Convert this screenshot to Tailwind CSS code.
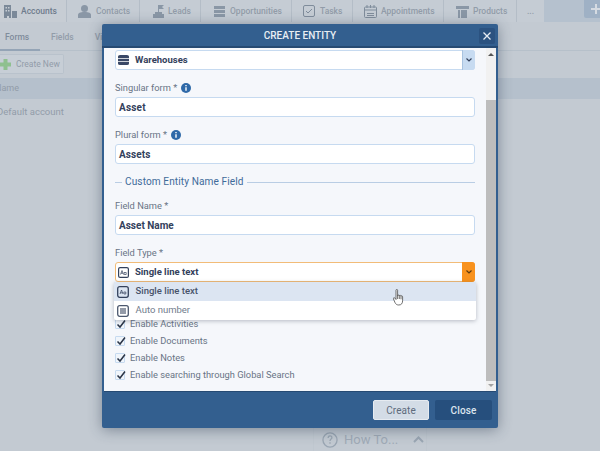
<!DOCTYPE html>
<html><head><meta charset="utf-8"><script src="https://cdn.jsdelivr.net/npm/@tailwindcss/browser@4"></script></head>
<body class="m-0 overflow-hidden">
<div class="relative w-[600px] h-[451px] overflow-hidden bg-[#c3cad2] font-['Roboto',sans-serif] text-[#929ca9]">
  <!-- page behind -->
  <div class="flex h-[22px] text-[8.5px] font-medium bg-[#c5ccd4]">
    <div class="w-[67px] flex items-center gap-[4px] pl-[4px] border-r border-[#b4bdc7] text-[#6f7c8c] bg-[#c7cdd4]">
      <svg width="13" height="13" viewBox="0 0 13 13" fill="#7b8999"><path d="M0 0h7v13H5v-2H3v2H0zM1.500 2v1.500H3V2zM4 2v1.500h1.500V2zM1.500 5v1.500H3V5zM4 5v1.500h1.500V5zM8 6h5v7H8z" fill-rule="evenodd"/></svg>Accounts</div>
    <div class="w-[73px] flex items-center gap-[5px] pl-[11px] border-r border-[#b4bdc7]">
      <svg width="13" height="13" viewBox="0 0 13 13" fill="#8a97a6"><circle cx="6.500" cy="3.500" r="3.500"/><path d="M0 13V10c0-2 2-3 6.500-3s6.500 1 6.500 3v3z"/></svg>Contacts</div>
    <div class="w-[61px] flex items-center gap-[3px] pl-[12px] border-r border-[#b4bdc7]">
      <svg width="13" height="13" viewBox="0 0 13 13" fill="#8a97a6"><path d="M6 0h1v7H6zM7 0h5l-2 2 2 2H7zM1 9h11v4H1zM3 7h7v2H3z"/></svg>Leads</div>
    <div class="w-[91px] flex items-center gap-[4px] pl-[12px] border-r border-[#b4bdc7]">
      <svg width="13" height="13" viewBox="0 0 13 13" fill="#8a97a6"><path d="M1 1h11v3H1zM1 5h11v3H1zM1 9h11v3H1z"/></svg>Opportunities</div>
    <div class="w-[61px] flex items-center gap-[5px] pl-[11px] border-r border-[#b4bdc7]">
      <svg width="12" height="12" viewBox="0 0 12 12" fill="none" stroke="#7f8c9b"><rect x="0.500" y="0.500" width="11" height="11" rx="1.500"/><path d="M3 6l2 2 4-4"/></svg>Tasks</div>
    <div class="w-[91px] flex items-center gap-[4px] pl-[11px] border-r border-[#b4bdc7]">
      <svg width="13" height="13" viewBox="0 0 13 13" fill="none" stroke="#7f8c9b"><rect x="0.500" y="2" width="12" height="10.500" rx="1"/><path d="M0.500 5h12M3 0v3M6.500 0v3M10 0v3M3 8.500h7M3 10.500h7" /></svg>Appointments</div>
    <div class="w-[73px] flex items-center gap-[4px] pl-[12px] border-r border-[#b4bdc7]">
      <svg width="13" height="13" viewBox="0 0 13 13" fill="#8a97a6"><path d="M0 1h13v3H0zM2 5h2v8H2zM5 5h6v8H5z"/></svg>Products</div>
    <div class="w-[27px] flex items-center pl-[10px]">...</div>
    <div class="flex-1 bg-[#b5c1ce] relative">
      <div class="absolute right-0 top-0 w-[16px] h-[18px] bg-[#9fb1c5] rounded-bl-[2px] flex items-center justify-center pl-[8px]">
        <svg class="shrink-0" width="10" height="10" viewBox="0 0 10 10" fill="#d5dbe2"><path d="M4 0h2v4h4v2H6v4H4V6H0V4h4z"/></svg>
      </div>
    </div>
  </div>
  <div class="flex h-[29px] text-[8.5px] font-medium border-b border-[#b6c0ca] relative">
    <div class="w-[40px] h-[29px] pl-[5px] pt-[9px] text-[#7f8c9b] border-b-2 border-[#94a4b6]">Forms</div>
    <div class="pl-[11px] pt-[9px]">Fields</div>
    <div class="pl-[21px] pt-[9px]">Views</div>
  </div>
  <div class="pt-[3px] h-[27px]">
    <div class="w-[64px] h-[20px] bg-[#c7ced6] border-y border-r border-[#b9c2cc] rounded-r-[2px] flex items-center gap-[5px] text-[8.5px] whitespace-nowrap">
      <svg class="shrink-0" width="11" height="11" viewBox="0 0 11 11" fill="#8fc08f"><path d="M3.500 0h4v3.500H11v4H7.500V11h-4V7.500H0v-4h3.500z"/></svg>Create New</div>
  </div>
  <div class="h-[21px] bg-[#b5c0cc] flex items-center text-[9px] -ml-[5px]">Name</div>
  <div class="pt-[6px] text-[9.5px] -ml-[3px]">Default account</div>
  <div class="absolute left-[313px] bottom-0 w-[114px] h-[23px] border-x border-[#bfc7cf] flex items-center gap-[6px] pl-[8px] text-[13px] text-[#a0abb7]">
    <svg width="16" height="16" viewBox="0 0 17 17" fill="none" stroke="#9aa6b3" stroke-width="1.400"><circle cx="8.500" cy="8.500" r="7.500"/><path d="M6.500 6.500c0-3 4-3 4-.5 0 1.500-2 1.500-2 3.500M8.500 11v1.500"/></svg>
    <span>How To...</span>
    <svg class="ml-[9px]" width="11" height="7" viewBox="0 0 11 7" fill="none" stroke="#9aa6b3" stroke-width="2"><path d="M1 6l4.500-4.500L10 6"/></svg>
  </div>

  <!-- modal -->
  <div class="absolute left-[102px] top-[24px] w-[396px] h-[404px] flex flex-col rounded-[2px] bg-[#335f8f] shadow-[0_2px_14px_rgba(40,55,75,0.45)]">
    <div class="h-[22px] shrink-0 relative flex items-center justify-center text-[10px] font-medium text-[#e9eef4]">
      <span>CREATE ENTITY</span>
      <div class="absolute right-[3px] top-[4px] w-[16px] h-[16px] bg-[#2b5280] rounded-[2px] flex items-center justify-center">
        <svg width="8" height="8" viewBox="0 0 8 8" stroke="#e8edf3" stroke-width="1.300"><path d="M0.500 0.500l7 7M7.500 0.500l-7 7"/></svg>
      </div>
    </div>
    <div class="h-[2px] shrink-0 bg-[#264a73]"></div>
    <div class="relative mx-[2px] h-[344px] shrink-0 bg-[#f5f7fb] border-b border-[#264a73] flex">
      <div class="w-[382px] pl-[11px] relative">
        <!-- warehouses -->
        <div class="w-[360px] h-[20px] bg-white border border-[#c6daf0] rounded-[3px] flex items-center mt-[2px] relative">
          <svg class="ml-[2px] shrink-0" width="11" height="10" viewBox="0 0 11 10" fill="#3a4866"><path d="M0 1.500Q0 0 2 0h7q2 0 2 1.500V3H0zM0 3.700h11v2.600H0zM0 7h11v1.500Q11 10 9 10H2q-2 0-2-1.500z"/></svg>
          <span class="ml-[6px] text-[9.500px] font-bold text-[#33415c]">Warehouses</span>
          <div class="absolute -right-px -top-px -bottom-px w-[13px] bg-[#c7dbf1] rounded-r-[3px] border-l border-[#a8c3e0] flex items-center justify-center">
            <svg width="6" height="4" viewBox="0 0 6 4" fill="none" stroke="#33415c" stroke-width="1.200"><path d="M0.500 0.500L3 3l2.500-2.500"/></svg>
          </div>
        </div>
        <div class="mt-[9px] h-[18px] flex items-center gap-[4px] text-[9.300px] text-[#687485]">Singular form *
          <svg width="10" height="10" viewBox="0 0 10 10"><circle cx="5" cy="5" r="5" fill="#2f69a8"/><path d="M4.300 4.200h1.400v3.600H4.300zM4.300 2h1.400v1.300H4.300z" fill="#fff"/></svg>
        </div>
        <div class="w-[360px] h-[20px] bg-white border border-[#c6daf0] rounded-[3px] flex items-center pl-[3px] text-[10px] font-bold text-[#33415c] tracking-[0.2px]">Asset</div>
        <div class="mt-[9px] h-[18px] flex items-center gap-[4px] text-[9.300px] text-[#687485]">Plural form *
          <svg width="10" height="10" viewBox="0 0 10 10"><circle cx="5" cy="5" r="5" fill="#2f69a8"/><path d="M4.300 4.200h1.400v3.600H4.300zM4.300 2h1.400v1.300H4.300z" fill="#fff"/></svg>
        </div>
        <div class="w-[360px] h-[20px] bg-white border border-[#c6daf0] rounded-[3px] flex items-center pl-[3px] text-[10px] font-bold text-[#33415c] tracking-[0.1px]">Assets</div>
        <div class="mt-[9px] w-[360px] h-[18px] flex items-center">
          <div class="w-[7px] h-px bg-[#b9cde4]"></div>
          <span class="px-[3px] text-[10.100px] text-[#3f6b9a] tracking-[0.1px]">Custom Entity Name Field</span>
          <div class="flex-1 h-px bg-[#b9cde4]"></div>
        </div>
        <div class="mt-[6px] h-[18px] flex items-center text-[9.300px] text-[#687485]">Field Name *</div>
        <div class="w-[360px] h-[20px] bg-white border border-[#c6daf0] rounded-[3px] flex items-center pl-[3px] text-[10px] font-bold text-[#33415c]">Asset Name</div>
        <div class="mt-[9px] h-[18px] flex items-center text-[9.300px] text-[#687485]">Field Type *</div>
        <div class="w-[360px] h-[20px] bg-white border border-[#f2bc78] rounded-[3px] flex items-center relative">
          <svg class="ml-[2px] shrink-0" width="11" height="11" viewBox="0 0 11 11" fill="none"><rect x="0.600" y="0.600" width="9.800" height="9.800" rx="1.500" stroke="#33415c" stroke-width="1.200"/><path d="M2.500 7.500L4 3.500l1.500 4M3 6.200h2M6 5.500h2.200v2H6.200z" stroke="#33415c" stroke-width="0.700"/></svg>
          <span class="ml-[6px] text-[9.500px] font-bold text-[#33415c]">Single line text</span>
          <div class="absolute -right-px -top-px -bottom-px w-[13px] bg-[#f8921e] rounded-r-[3px] flex items-center justify-center">
            <svg width="6" height="4" viewBox="0 0 6 4" fill="none" stroke="#5d3a10" stroke-width="1.200"><path d="M0.500 0.500L3 3l2.500-2.500"/></svg>
          </div>
        </div>
        <!-- checks -->
        <div class="mt-[35px] flex flex-col gap-[4px] text-[9.300px] text-[#687485]">
          <div class="h-[13px] flex items-center gap-[5px]">
            <span class="w-[10px] h-[10px] shrink-0 bg-[#f0f5fb] border border-[#c6daf0] rounded-[1px] relative"><svg class="absolute left-0 -top-[1px]" width="10" height="10" viewBox="0 0 10 10" fill="none" stroke="#2a3447" stroke-width="1.500"><path d="M1.500 5.500l2.500 2.500L9 1.500"/></svg></span>Enable Activities</div>
          <div class="h-[13px] flex items-center gap-[5px]">
            <span class="w-[10px] h-[10px] shrink-0 bg-[#f0f5fb] border border-[#c6daf0] rounded-[1px] relative"><svg class="absolute left-0 -top-[1px]" width="10" height="10" viewBox="0 0 10 10" fill="none" stroke="#2a3447" stroke-width="1.500"><path d="M1.500 5.500l2.500 2.500L9 1.500"/></svg></span>Enable Documents</div>
          <div class="h-[13px] flex items-center gap-[5px]">
            <span class="w-[10px] h-[10px] shrink-0 bg-[#f0f5fb] border border-[#c6daf0] rounded-[1px] relative"><svg class="absolute left-0 -top-[1px]" width="10" height="10" viewBox="0 0 10 10" fill="none" stroke="#2a3447" stroke-width="1.500"><path d="M1.500 5.500l2.500 2.500L9 1.500"/></svg></span>Enable Notes</div>
          <div class="h-[13px] flex items-center gap-[5px]">
            <span class="w-[10px] h-[10px] shrink-0 bg-[#f0f5fb] border border-[#c6daf0] rounded-[1px] relative"><svg class="absolute left-0 -top-[1px]" width="10" height="10" viewBox="0 0 10 10" fill="none" stroke="#2a3447" stroke-width="1.500"><path d="M1.500 5.500l2.500 2.500L9 1.500"/></svg></span>Enable searching through Global Search</div>
        </div>
        <!-- dropdown -->
        <div class="absolute left-[10px] top-[234px] w-[362px] h-[38px] bg-white rounded-[2px] shadow-[0_1px_4px_rgba(60,70,90,0.35)] text-[9.500px]">
          <div class="h-[19px] bg-[#dce5f2] flex items-center font-medium text-[#47536a]">
            <svg class="ml-[3px] shrink-0" width="12" height="12" viewBox="0 0 12 12" fill="none"><rect x="0.700" y="0.700" width="10.600" height="10.600" rx="2" stroke="#33415c" stroke-width="1.300"/><path d="M3 8L4.500 4 6 8M3.500 6.800h2M6.800 6h2v2H7z" stroke="#33415c" stroke-width="0.700"/></svg>
            <span class="ml-[6.500px]">Single line text</span>
          </div>
          <div class="h-[19px] flex items-center text-[#717c8c]">
            <svg class="ml-[3px] shrink-0" width="12" height="12" viewBox="0 0 12 12" fill="none"><rect x="0.700" y="0.700" width="10.600" height="10.600" rx="2" stroke="#4c586e" stroke-width="1.300"/><path d="M4 3v6M6 3v6M8 3v6" stroke="#4c586e" stroke-width="1.200"/></svg>
            <span class="ml-[6.500px]">Auto number</span>
          </div>
        </div>
      </div>
      <!-- scrollbar -->
      <div class="w-[10px] bg-[#f1f1f1] flex flex-col items-center relative ml-auto">
        <svg class="mt-[5px]" width="6" height="3" viewBox="0 0 6 3" fill="#555"><path d="M3 0l3 3H0z"/></svg>
        <div class="absolute left-0 top-[52px] w-[10px] h-[281px] bg-[#bdbdbd]"></div>
        <svg class="absolute bottom-[4px]" width="6" height="3" viewBox="0 0 6 3" fill="#a3a3a3"><path d="M0 0h6L3 3z"/></svg>
      </div>
    </div>
    <div class="flex-1 flex items-center justify-end gap-[6px] pr-[6px]">
      <div class="w-[56px] h-[20px] bg-[#d3dce6] border border-[#e6ebf1] rounded-[2px] flex items-center justify-center text-[10px] text-[#5e6b7c] tracking-[0.1px]">Create</div>
      <div class="w-[57px] h-[20px] bg-[#264f7d] rounded-[2px] flex items-center justify-center text-[10px] font-medium text-[#dde5ee] tracking-[0.1px]">Close</div>
    </div>
  </div>
  <!-- cursor -->
  <svg class="absolute left-[393px] top-[289px]" width="13" height="17" viewBox="0 0 13 17" fill="#fff" stroke="#4a4a4a" stroke-width="0.800"><path d="M3 1.200c0-1 1.600-1 1.600 0V7c0-1.300 1.700-1.200 1.700 0 0-1 1.700-1 1.700.3 0-.9 1.600-.8 1.600.5v4c0 2.500-1.200 4.200-3.800 4.200-2 0-3-.9-3.800-2.400L.5 10c-.6-1 .6-1.800 1.300-1L3 10.500z"/><path d="M4.600 7v3M6.300 7v3M8 7.300v3" fill="none"/></svg>
</div>
</body></html>
